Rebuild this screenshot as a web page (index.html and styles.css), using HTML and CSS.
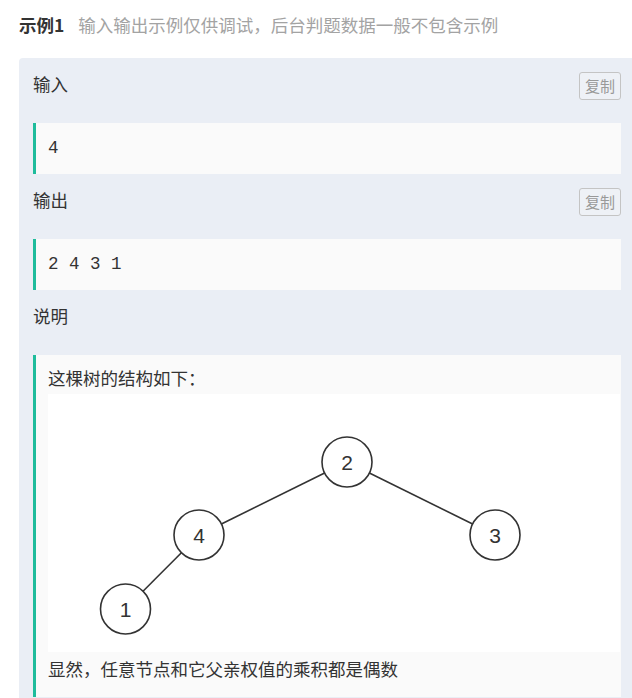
FILE: index.html
```html
<!DOCTYPE html>
<html lang="zh-CN">
<head>
    <meta charset="UTF-8">
    <meta name="viewport" content="width=device-width, initial-scale=1.0">
    <title>示例1</title>
    <link rel="stylesheet" href="styles.css">
</head>
<body>
    <div class="title">
        <span class="title-main">示例1</span>
        <span class="title-sub">输入输出示例仅供调试，后台判题数据一般不包含示例</span>
    </div>
    <div class="panel">
        <div class="row">
            <span class="label">输入</span>
            <button class="copy">复制</button>
        </div>
        <pre class="block">4</pre>
        <div class="row">
            <span class="label">输出</span>
            <button class="copy">复制</button>
        </div>
        <pre class="block">2 4 3 1</pre>
        <div class="row">
            <span class="label">说明</span>
        </div>
        <div class="block desc">
            <div class="line">这棵树的结构如下：</div>
            <svg class="tree" width="572" height="258" viewBox="0 0 572 258">
                <g stroke="#333" stroke-width="1.6" fill="none">
                    <line x1="276.6" y1="79" x2="173.4" y2="130"/>
                    <line x1="321.4" y1="79" x2="424.6" y2="130"/>
                    <line x1="133.4" y1="158.7" x2="95" y2="197.3"/>
                    <circle cx="299" cy="68" r="25"/>
                    <circle cx="151" cy="141" r="25"/>
                    <circle cx="447" cy="141" r="25"/>
                    <circle cx="77.5" cy="215" r="25"/>
                </g>
                <g class="node-text" text-anchor="middle">
                    <text x="299" y="75.5">2</text>
                    <text x="151" y="148.5">4</text>
                    <text x="447" y="148.5">3</text>
                    <text x="77.5" y="222.5">1</text>
                </g>
            </svg>
            <div class="line">显然，任意节点和它父亲权值的乘积都是偶数</div>
        </div>
    </div>
</body>
</html>
```

FILE: styles.css
```css
html, body {
    margin: 0;
    overflow: hidden;
    background-color: #fff;
}
body {
    padding: 11px 0 0 19px;
    font-family: "Noto Sans CJK SC", sans-serif;
    color: #333;
}
.title {
    height: 28px;
    line-height: 28px;
    margin-bottom: 19px;
    font-size: 17.5px;
    white-space: nowrap;
}
.title-main {
    font-weight: bold;
    color: #333;
}
.title-sub {
    margin-left: 10px;
    color: #a3a3a3;
}
.panel {
    width: 588px;
    padding: 14px;
    background-color: #eaeef5;
    border-radius: 4px;
}
.row {
    display: flex;
    align-items: center;
    justify-content: space-between;
    height: 28px;
    margin-bottom: 23px;
}
.label {
    font-size: 17.5px;
    line-height: 1;
    padding-bottom: 4px;
    color: #333;
}
.copy {
    height: 28px;
    width: 42px;
    padding: 0;
    font-family: "Noto Sans CJK SC", sans-serif;
    font-size: 15px;
    line-height: 26px;
    color: #999;
    background-color: #eef1f6;
    border: 1px solid #c4c4c4;
    border-radius: 3px;
}
.block {
    margin: 0 0 14px 0;
    padding: 12px 0 12px 12px;
    background-color: #fafafa;
    border-left: 3px solid #1fbc9c;
    font-family: "Liberation Mono", "Noto Sans CJK SC", monospace;
    font-size: 17.5px;
    line-height: 27px;
    color: #333;
}
.desc .line {
    height: 27px;
}
.tree {
    display: block;
    margin-bottom: 6px;
    background-color: #fff;
}
.node-text {
    font-family: "Liberation Sans", Arial, sans-serif;
    font-size: 21px;
    fill: #333;
}
```
